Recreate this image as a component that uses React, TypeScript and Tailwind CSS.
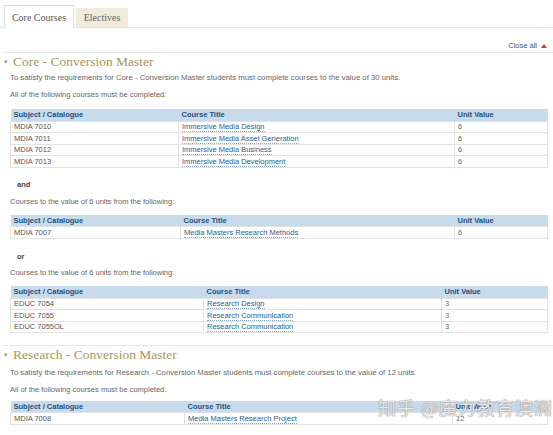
import React from 'react';

type Row = { code: string; title: string; unit: string };

interface CourseTableProps {
  rows: Row[];
  subjectW: string;
  titleW: string;
}

function CourseTable({ rows, subjectW, titleW }: CourseTableProps) {
  return (
    <table className="ml-[10px] w-[538px] border-collapse text-[7.5px] leading-none">
      <thead>
        <tr className="bg-[#c8dbec] text-[#1f4f7f] font-bold h-[12px]">
          <th className={`${subjectW} text-left pl-[3px] font-bold`}>Subject / Catalogue</th>
          <th className={`${titleW} text-left pl-[3px] font-bold`}>Course Title</th>
          <th className="text-left pl-[3px] font-bold">Unit Value</th>
        </tr>
      </thead>
      <tbody>
        {rows.map((r) => (
          <tr key={r.code} className="h-[11.5px] text-[#555]">
            <td className="border border-[#e2e2e2] pl-[3px]">{r.code}</td>
            <td className="border border-[#e2e2e2] pl-[3px]">
              <span className="text-[#2b5d8f] border-b border-dotted border-[#8aa9c8]">{r.title}</span>
            </td>
            <td className="border border-[#e2e2e2] pl-[3px] text-[#666]">{r.unit}</td>
          </tr>
        ))}
      </tbody>
    </table>
  );
}

function SectionHeading({ children }: { children: React.ReactNode }) {
  return (
    <div className="flex items-center border-t border-[#e1e7ee] ml-[3px] pt-[2px]">
      <span className="text-[7px] text-[#999] w-[10px] pl-[1px] leading-[14px]">▾</span>
      <h2 className="font-['Liberation_Serif',serif] text-[13.5px] text-[#ad9457] leading-[14px]">{children}</h2>
    </div>
  );
}

function Para({ children, cls = '' }: { children: React.ReactNode; cls?: string }) {
  return <p className={`ml-[10px] text-[#666] leading-[10px] ${cls}`}>{children}</p>;
}

export default function App() {
  const t1: Row[] = [
    { code: 'MDIA 7010', title: 'Immersive Media Design', unit: '6' },
    { code: 'MDIA 7011', title: 'Immersive Media Asset Generation', unit: '6' },
    { code: 'MDIA 7012', title: 'Immersive Media Business', unit: '6' },
    { code: 'MDIA 7013', title: 'Immersive Media Development', unit: '6' },
  ];
  const t2: Row[] = [{ code: 'MDIA 7007', title: 'Media Masters Research Methods', unit: '6' }];
  const t3: Row[] = [
    { code: 'EDUC 7054', title: 'Research Design', unit: '3' },
    { code: 'EDUC 7055', title: 'Research Communication', unit: '3' },
    { code: 'EDUC 7055OL', title: 'Research Communication', unit: '3' },
  ];
  const t4: Row[] = [{ code: 'MDIA 7008', title: 'Media Masters Research Project', unit: '12' }];

  return (
    <div className="relative w-[553px] h-[435px] overflow-hidden bg-white font-['Liberation_Sans',Arial,sans-serif]">
      <div className="flex items-end pl-[4px] pt-[5px] border-b border-[#e3e3e3]">
        <div className="-mb-px h-[23px] w-[70px] border border-b-0 border-[#dcdcdc] bg-white flex items-center justify-center font-['Liberation_Serif',serif] text-[10px] text-[#555]">
          Core Courses
        </div>
        <div className="ml-[2px] h-[19px] w-[52px] bg-[#f2eadb] flex items-center justify-center font-['Liberation_Serif',serif] text-[10px] text-[#666]">
          Electives
        </div>
      </div>

      <div className="flex justify-end items-center pr-[6px] mt-[13px] h-[10px]">
        <span className="text-[7.5px] text-[#2b5d8f]">Close all</span>
        <span className="ml-[4px] w-0 h-0 border-l-[3px] border-r-[3px] border-b-[4px] border-l-transparent border-r-transparent border-b-[#d9342b]" />
      </div>

      <div className="mt-[1px]">
        <SectionHeading>Core - Conversion Master</SectionHeading>
        <Para cls="mt-[4px] text-[7.75px]">To satisfy the requirements for Core - Conversion Master students must complete courses to the value of 30 units.</Para>
        <Para cls="mt-[7px] mb-[9px] text-[7.5px]">All of the following courses must be completed:</Para>
        <CourseTable rows={t1} subjectW="w-[168px]" titleW="w-[276px]" />

        <p className="ml-[17px] mt-[12px] text-[7.5px] font-bold text-[#444] leading-[10px]">and</p>
        <Para cls="mt-[7px] mb-[8px] text-[7.5px]">Courses to the value of 6 units from the following:</Para>
        <CourseTable rows={t2} subjectW="w-[170px]" titleW="w-[274px]" />

        <p className="ml-[17px] mt-[13.5px] text-[7.5px] font-bold text-[#444] leading-[10px]">or</p>
        <Para cls="mt-[6px] mb-[8px] text-[7.5px]">Courses to the value of 6 units from the following:</Para>
        <CourseTable rows={t3} subjectW="w-[193px]" titleW="w-[238px]" />
      </div>

      <div className="mt-[11.5px]">
        <SectionHeading>Research - Conversion Master</SectionHeading>
        <Para cls="mt-[6px] text-[7.75px]">To satisfy the requirements for Research - Conversion Master students must complete courses to the value of 12 units.</Para>
        <Para cls="mt-[7px] mb-[6px] text-[7.5px]">All of the following courses must be completed:</Para>
        <CourseTable rows={t4} subjectW="w-[174px]" titleW="w-[268px]" />
      </div>

      <div className="absolute left-[378px] top-[398px] whitespace-nowrap text-[18px] leading-none tracking-[1px] text-white/80 [text-shadow:0_0_1px_#888,0_0_1px_#888] font-['Noto_Sans_CJK_SC',sans-serif]">
        知乎 @魔力教育澳洲
      </div>
    </div>
  );
}
